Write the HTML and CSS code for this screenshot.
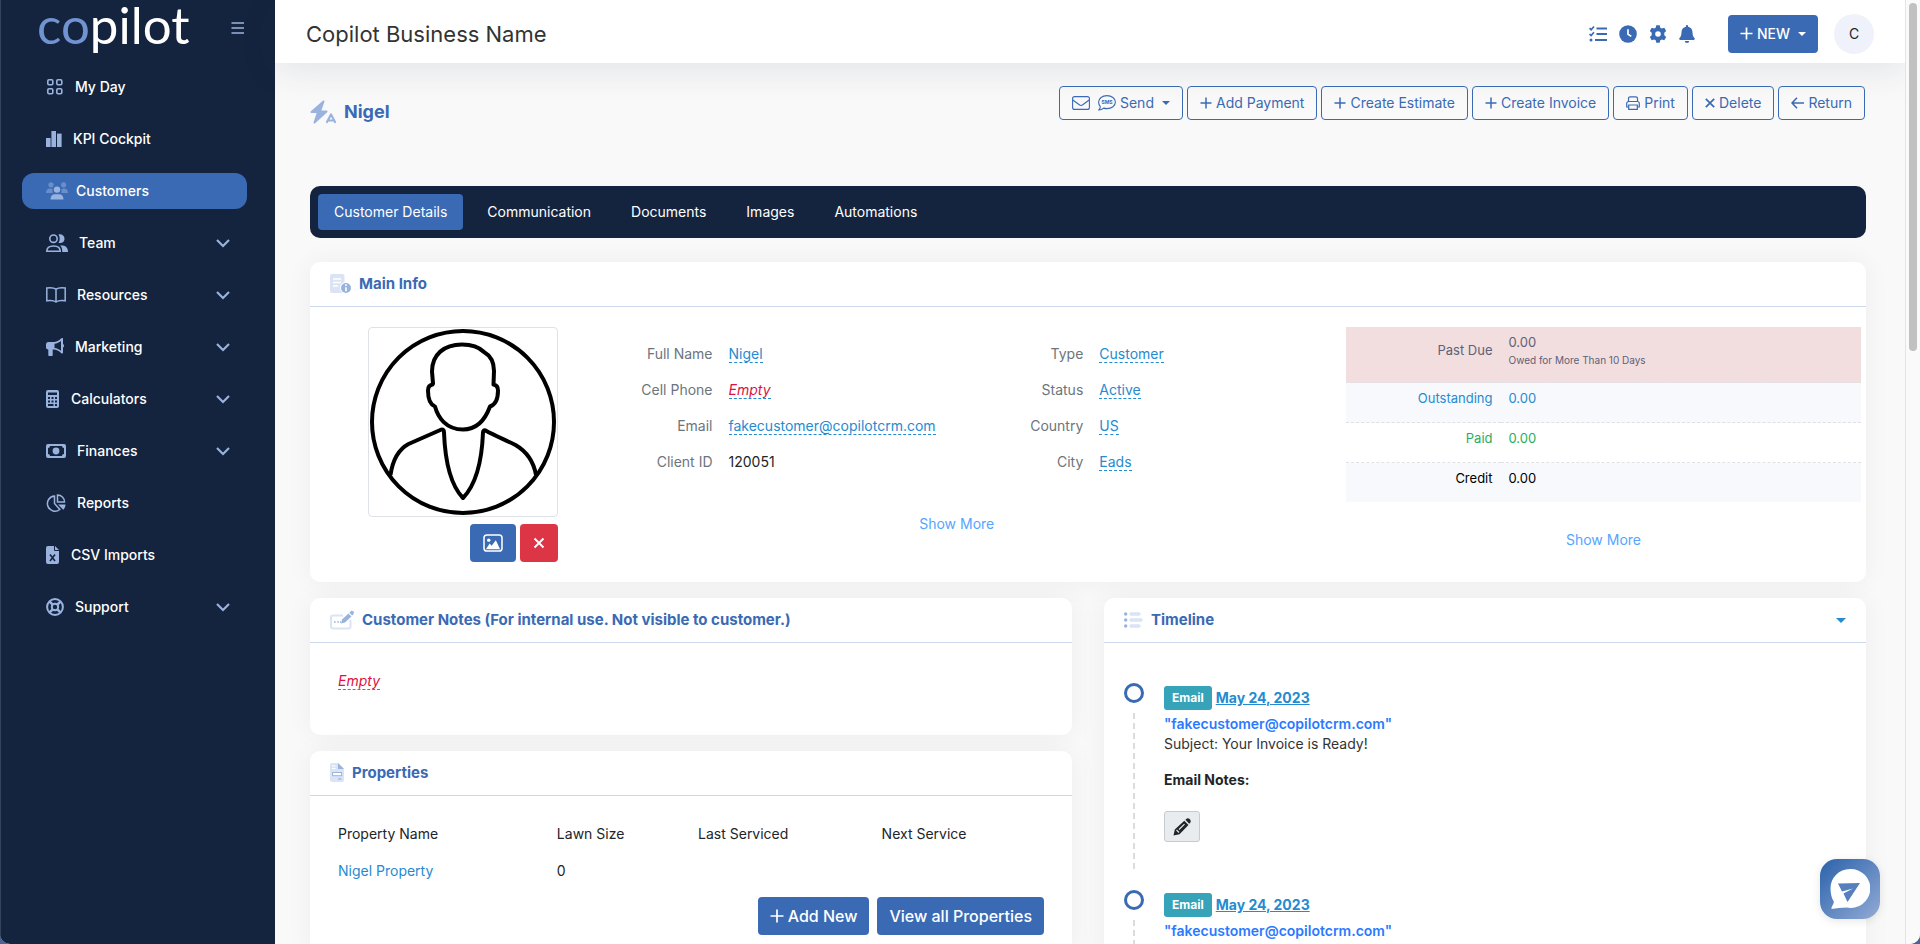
FILE: index.html
```
<!DOCTYPE html>
<html lang="en">
<head>
    <meta charset="UTF-8">
    <meta name="viewport" content="width=device-width, initial-scale=1.0">
    <title>Nigel - Copilot</title>
    <link rel="stylesheet" href="styles.css">
</head>
<body>
    <div class="app">
        <aside class="sidebar">
            <div class="brand">
                <a class="logo" href="#"><span class="logo-co">co</span>pilot</a>
                <button class="menu-toggle" aria-label="Toggle menu">
                    <svg width="14" height="12" viewBox="0 0 14 12" fill="none" stroke="currentColor" stroke-width="1.6"><path d="M0.5 1h12.5M0.5 6h12.5M0.5 11h12.5"/></svg>
                </button>
            </div>
            <nav class="nav">
                <a class="nav-item" href="#">
                    <svg width="18" height="18" viewBox="0 0 18 18" fill="none" stroke="currentColor" stroke-width="1.6"><rect x="1.8" y="1.8" width="5" height="5" rx="1.2"/><rect x="10.8" y="1.8" width="5" height="5" rx="1.2"/><rect x="1.8" y="10.8" width="5" height="5" rx="1.2"/><rect x="10.8" y="10.8" width="5" height="5" rx="1.2"/></svg>
                    <span>My Day</span>
                </a>
                <a class="nav-item" href="#">
                    <svg width="16" height="18" viewBox="0 0 16 18" fill="currentColor"><rect x="0" y="8" width="4.6" height="9"/><rect x="5.4" y="1" width="4.6" height="16"/><rect x="11" y="3.6" width="4.6" height="13.4"/></svg>
                    <span>KPI Cockpit</span>
                </a>
                <a class="nav-item active" href="#">
                    <svg class="wide" width="22" height="18" viewBox="0 0 22 18" fill="currentColor"><g opacity="0.5"><circle cx="5" cy="2.8" r="2.6"/><circle cx="17.6" cy="2.8" r="2.6"/><path d="M0 11c0-3 1.500-4.500 4-4.500 1.200 0 2 .3 2.700.8A5 5 0 0 0 6.800 11zM22 11c0-3-1.500-4.500-4-4.500-1.200 0-2 .3-2.700.8A5 5 0 0 1 15.200 11z"/></g><circle cx="11" cy="7.600" r="3.200"/><path d="M4.500 17.500c0-3.500 1.800-5.200 4.500-5.200h4c2.700 0 4.500 1.700 4.500 5.200z"/></svg>
                    <span>Customers</span>
                </a>
                <a class="nav-item" href="#">
                    <svg width="22" height="18" viewBox="0 0 22 18" fill="none" stroke="currentColor" stroke-width="1.600"><circle cx="7.500" cy="4.700" r="3.700"/><path d="M.8 17.200c0-3.600 2.200-5.200 6.700-5.200s6.700 1.600 6.700 5.200z"/><path d="M12.500.5c2.700-.8 6 .8 6 4.200s-3.300 5-6 4.200c1.600-2.600 1.600-5.800 0-8.400zM14 11.600c5-.4 8 1.400 8 6.400h-5.800c.2-2.800-.4-4.800-2.200-6.400z" fill="currentColor" stroke="none"/></svg>
                    <span>Team</span>
                    <svg class="chevron" width="14" height="9" viewBox="0 0 14 9" fill="none" stroke="currentColor" stroke-width="2.200"><path d="M1 1l6 6 6-6"/></svg>
                </a>
                <a class="nav-item" href="#">
                    <svg width="20" height="16" viewBox="0 0 20 16" fill="none" stroke="currentColor" stroke-width="1.500"><path d="M10 2.200C8 .8 4.500.5.8 1v12.800c3.700-.5 7.200-.2 9.200 1.200 2-1.400 5.500-1.700 9.200-1.200V1C15.500.5 12 .8 10 2.200zM10 2.200V15"/></svg>
                    <span>Resources</span>
                    <svg class="chevron" width="14" height="9" viewBox="0 0 14 9" fill="none" stroke="currentColor" stroke-width="2.200"><path d="M1 1l6 6 6-6"/></svg>
                </a>
                <a class="nav-item" href="#">
                    <svg width="18" height="18" viewBox="0 0 18 18" fill="currentColor"><path d="M17 .5c-.5-.7-1.400-.5-2 .1C13 2.800 10.500 4 7.500 4H2.300C1 4 0 5 0 6.300v3C0 10.600 1 11.600 2.300 11.600V17c0 .6.400 1 1 1h2.400c.6 0 1-.4 1-1v-5.400h.8c3 0 5.500 1.200 7.500 3.400.6.600 1.500.8 2 .1V9.500c.6-.3 1-1 1-1.700s-.4-1.400-1-1.700zM15 12.700c-1.900-1.500-4-2.500-6.500-2.800V5.700C11 5.400 13.100 4.400 15 2.900z"/></svg>
                    <span>Marketing</span>
                    <svg class="chevron" width="14" height="9" viewBox="0 0 14 9" fill="none" stroke="currentColor" stroke-width="2.200"><path d="M1 1l6 6 6-6"/></svg>
                </a>
                <a class="nav-item" href="#">
                    <svg width="14" height="18" viewBox="0 0 14 18" fill="currentColor"><path fill-rule="evenodd" d="M2 0h9a2 2 0 0 1 2 2v14a2 2 0 0 1-2 2H2a2 2 0 0 1-2-2V2a2 2 0 0 1 2-2zM2 2.500V5h9V2.500zM2 7v2h2V7zm3.500 0v2h2V7zM9 7v2h2V7zM2 10.500v2h2v-2zm3.500 0v2h2v-2zm3.500 0v2h2v-2zM2 14v2h5.500v-2zm7 0v2h2v-2z"/></svg>
                    <span>Calculators</span>
                    <svg class="chevron" width="14" height="9" viewBox="0 0 14 9" fill="none" stroke="currentColor" stroke-width="2.200"><path d="M1 1l6 6 6-6"/></svg>
                </a>
                <a class="nav-item" href="#">
                    <svg width="20" height="14" viewBox="0 0 20 14" fill="currentColor"><path fill-rule="evenodd" d="M2 0h16a2 2 0 0 1 2 2v10a2 2 0 0 1-2 2H2a2 2 0 0 1-2-2V2a2 2 0 0 1 2-2zM4 2C4 3.200 3.200 4 2 4v6c1.200 0 2 .8 2 2h12c0-1.200.8-2 2-2V4c-1.200 0-2-.8-2-2z"/><circle cx="10" cy="7" r="3.400"/></svg>
                    <span>Finances</span>
                    <svg class="chevron" width="14" height="9" viewBox="0 0 14 9" fill="none" stroke="currentColor" stroke-width="2.200"><path d="M1 1l6 6 6-6"/></svg>
                </a>
                <a class="nav-item" href="#">
                    <svg width="20" height="18" viewBox="0 0 20 18" fill="none" stroke="currentColor" stroke-width="1.500"><path d="M8.500 2A7.600 7.600 0 1 0 13.800 15.500L8.500 9.500z"/><path d="M11.500.9v7h7A7 7 0 0 0 11.500.9z"/><path d="M12 10.500h7.500c0 2-.8 3.800-2.200 5.200z" fill="currentColor" stroke="none"/></svg>
                    <span>Reports</span>
                </a>
                <a class="nav-item" href="#">
                    <svg width="14" height="18" viewBox="0 0 14 18" fill="currentColor"><path d="M2 0h6v4a1 1 0 0 0 1 1h4v11a2 2 0 0 1-2 2H2a2 2 0 0 1-2-2V2a2 2 0 0 1 2-2z"/><path d="M9 0l4 4H9z"/><path d="M4 8.500l5 6.500M9 8.500L4 15" stroke="#14243e" stroke-width="1.600"/></svg>
                    <span>CSV Imports</span>
                </a>
                <a class="nav-item" href="#">
                    <svg width="18" height="18" viewBox="0 0 18 18" fill="none" stroke="currentColor"><circle cx="9" cy="9" r="7.900" stroke-width="2"/><circle cx="9" cy="9" r="3.200" stroke-width="2"/><path d="M3.300 3.300l3.400 3.400M14.700 3.300l-3.400 3.400M3.300 14.700l3.400-3.400M14.700 14.700l-3.400-3.400" stroke-width="2.600"/></svg>
                    <span>Support</span>
                    <svg class="chevron" width="14" height="9" viewBox="0 0 14 9" fill="none" stroke="currentColor" stroke-width="2.200"><path d="M1 1l6 6 6-6"/></svg>
                </a>
            </nav>
        </aside>

        <div class="page">
            <header class="topbar">
                <h1>Copilot Business Name</h1>
                <div class="topbar-icons">
                    <button aria-label="Tasks">
                        <svg width="18" height="18" viewBox="0 0 18 18" fill="none" stroke="currentColor" stroke-width="2.200"><path d="M7.500 3.500H18M7.500 9H18M6 15H18"/><path d="M.6 3.200l1.500 1.500L5 1.500M.6 9l1.500 1.500L5 7.300" stroke-width="1.700"/><circle cx="2" cy="15" r="1.500" fill="currentColor" stroke="none"/></svg>
                    </button>
                    <button aria-label="Time">
                        <svg width="18" height="18" viewBox="0 0 18 18"><circle cx="9" cy="9" r="8.800" fill="currentColor"/><path d="M9 4.300V9.200l3.300 2.200" fill="none" stroke="#fff" stroke-width="1.700"/></svg>
                    </button>
                    <button aria-label="Settings">
                        <svg width="18" height="18" viewBox="0 0 18 18" fill="currentColor"><path fill-rule="evenodd" d="M7.300.2h3.400l.6 2.500 1.500.9L15.300 2.800 17.200 6 15.300 7.800v2.400l1.900 1.800-1.900 3.200-2.500-.8-1.500.9-.6 2.500H7.300l-.6-2.500-1.500-.9-2.500.8L.8 12l1.900-1.800V7.800L.8 6l1.900-3.200 2.500.8 1.500-.9zM9 6.200a2.800 2.800 0 1 0 0 5.600 2.800 2.800 0 0 0 0-5.600z"/></svg>
                    </button>
                    <button aria-label="Notifications">
                        <svg width="16" height="18" viewBox="0 0 16 18" fill="currentColor"><path d="M8 0c.6 0 1.100.5 1.100 1.100v.6C11.700 2.200 13.500 4.400 13.500 7c0 3 .6 4.600 2 6 .7.8.2 1.900-.8 1.900H1.300c-1 0-1.500-1.100-.8-1.900 1.400-1.400 2-3 2-6 0-2.600 1.800-4.800 4.400-5.300v-.6C6.900.5 7.400 0 8 0zM5.800 16h4.400a2.200 2 0 0 1-4.400 0z"/></svg>
                    </button>
                </div>
                <button class="btn btn-primary btn-new">
                    <svg width="13" height="13" viewBox="0 0 13 13" fill="none" stroke="currentColor" stroke-width="1.700"><path d="M6.500 0.500v12M0.500 6.500h12"/></svg>
                    NEW
                    <span class="caret"></span>
                </button>
                <button class="user">C</button>
            </header>

            <main class="content">
                <div class="page-head">
                    <h2 class="page-title">
                        <svg width="26" height="24" viewBox="0 0 26 24" fill="none" stroke="currentColor" stroke-linejoin="round" stroke-linecap="round"><path d="M13.500 1.500L1.500 12h6.500L4.500 22.500 16.500 11.500H10z" fill="currentColor" stroke-width="2"/><path d="M17 22l4-7.500 4 7.500M18.500 20.500h5" stroke-width="2.200"/></svg>
                        Nigel
                    </h2>
                    <div class="actions">
                        <button class="btn btn-outline">
                            <svg width="18" height="14" viewBox="0 0 18 14" fill="none" stroke="currentColor" stroke-width="1.100"><rect x=".6" y=".6" width="16.800" height="12.800" rx="2"/><path d="M.8 4l6.500 4.800c1 .8 2.400.8 3.400 0L17.200 4"/></svg>
                            <svg class="sms" width="18" height="16" viewBox="0 0 18 16"><path d="M9 .6c4.700 0 8.400 2.800 8.400 6.500s-3.700 6.500-8.400 6.500c-1.200 0-2.300-.2-3.300-.5C4.500 14.200 2.700 15 .8 15c1-1 1.400-2 1.500-3.300C1.200 10.500.6 8.900.6 7.100.6 3.400 4.300.6 9 .6z" fill="none" stroke="currentColor" stroke-width="1.100"/><text x="9" y="9.300" text-anchor="middle">SMS</text></svg>
                            Send
                            <span class="caret"></span>
                        </button>
                        <button class="btn btn-outline"><svg width="12" height="12" viewBox="0 0 12 12" fill="none" stroke="currentColor" stroke-width="1.500"><path d="M6 .5v11M.5 6h11"/></svg>Add Payment</button>
                        <button class="btn btn-outline"><svg width="12" height="12" viewBox="0 0 12 12" fill="none" stroke="currentColor" stroke-width="1.500"><path d="M6 .5v11M.5 6h11"/></svg>Create Estimate</button>
                        <button class="btn btn-outline"><svg width="12" height="12" viewBox="0 0 12 12" fill="none" stroke="currentColor" stroke-width="1.500"><path d="M6 .5v11M.5 6h11"/></svg>Create Invoice</button>
                        <button class="btn btn-outline"><svg width="14" height="14" viewBox="0 0 14 14" fill="none" stroke="currentColor" stroke-width="1.200"><path d="M2.500 5.500v-3a1.700 1.700 0 0 1 1.700-1.700h5.600a1.700 1.700 0 0 1 1.700 1.700v3M2.500 11H.7V7.500a2 2 0 0 1 2-2h8.600a2 2 0 0 1 2 2V11h-1.800M2.700 9h8.600v4.300H2.700z"/></svg>Print</button>
                        <button class="btn btn-outline"><svg width="10" height="10" viewBox="0 0 10 10" fill="none" stroke="currentColor" stroke-width="1.700"><path d="M.8.800l8.400 8.400M9.200.8L.8 9.200"/></svg>Delete</button>
                        <button class="btn btn-outline"><svg width="13" height="12" viewBox="0 0 13 12" fill="none" stroke="currentColor" stroke-width="1.600"><path d="M6 .8L1 6l5 5.200M1 6h12"/></svg>Return</button>
                    </div>
                </div>

                <nav class="tabs">
                    <a class="tab active" href="#">Customer Details</a>
                    <a class="tab" href="#">Communication</a>
                    <a class="tab" href="#">Documents</a>
                    <a class="tab" href="#">Images</a>
                    <a class="tab" href="#">Automations</a>
                </nav>

                <section class="card main-info">
                    <h3 class="card-header">
                        <svg width="21" height="22" viewBox="0 0 21 22"><rect x="0" y="1" width="14.500" height="19" rx="2" fill="#dae4f5"/><path d="M3 6h8M3 9.500h8M3 13h5" stroke="#fff" stroke-width="1.300"/><circle cx="16" cy="15" r="6" fill="#fff"/><circle cx="16" cy="15" r="5" fill="#9ab3de"/><path d="M16 14.200v4M16 11.300v1.700" stroke="#fff" stroke-width="1.600"/></svg>
                        Main Info
                    </h3>
                    <div class="info-body">
                        <div class="photo-col">
                            <div class="photo">
                                <svg viewBox="0 0 186 186" role="img" aria-label="Customer photo" fill="none" stroke="#000" stroke-width="4" stroke-linejoin="round"><circle cx="93" cy="93" r="91"/><path d="M92 15.500c-18 0-30 10-30 27l1 12-.5 1c-3 .5-4.500 3-4.500 6 0 8 2 14 7 16 3 11 11 23 28 23 16 0 23-12 27-23 6-2 8-8 8-16 0-3-1.500-5.500-4.500-6L124 42c0-9-3-15-10-19-5-5-12-7.500-22-7.500z"/><path d="M20.500 146c2-14 7-25 18-31l33-14.500c2 0 2.500 1 2.500 3 1 26 5 51 19 65.500 14-14.500 19-39.500 20-65.500 0-2 1-2.500 2.500-2 9 5 20 9.500 30 14.500 12 7 18 16 20.500 30"/></svg>
                            </div>
                            <div class="photo-actions">
                                <button class="btn btn-primary" aria-label="Change photo">
                                    <svg width="20" height="18" viewBox="0 0 21 19"><rect x="1" y="1" width="19" height="17" rx="3" fill="none" stroke="currentColor" stroke-width="1.600"/><circle cx="6" cy="6.500" r="1.800" fill="currentColor"/><path d="M3 16l4-6 2 2.500 4.500-6L18 16z" fill="currentColor"/></svg>
                                </button>
                                <button class="btn btn-danger" aria-label="Remove photo">
                                    <svg width="12" height="12" viewBox="0 0 12 12" fill="none" stroke="currentColor" stroke-width="1.900"><path d="M1.500 1.500l9 9M10.500 1.500l-9 9"/></svg>
                                </button>
                            </div>
                        </div>
                        <div class="details-col">
                            <div class="details">
                                <dl>
                                    <dt>Full Name</dt><dd><a class="editable" href="#">Nigel</a></dd>
                                    <dt>Cell Phone</dt><dd><a class="editable empty" href="#">Empty</a></dd>
                                    <dt>Email</dt><dd><a class="editable" href="#">fakecustomer@copilotcrm.com</a></dd>
                                    <dt>Client ID</dt><dd>120051</dd>
                                </dl>
                                <dl>
                                    <dt>Type</dt><dd><a class="editable" href="#">Customer</a></dd>
                                    <dt>Status</dt><dd><a class="editable" href="#">Active</a></dd>
                                    <dt>Country</dt><dd><a class="editable" href="#">US</a></dd>
                                    <dt>City</dt><dd><a class="editable" href="#">Eads</a></dd>
                                </dl>
                            </div>
                            <a class="show-more" href="#">Show More</a>
                        </div>
                        <div class="balance-col">
                            <table class="balance">
                                <tr class="past-due"><th scope="row">Past Due</th><td>0.00<small>Owed for More Than 10 Days</small></td></tr>
                                <tr class="outstanding"><th scope="row">Outstanding</th><td>0.00</td></tr>
                                <tr class="paid"><th scope="row">Paid</th><td>0.00</td></tr>
                                <tr class="credit"><th scope="row">Credit</th><td>0.00</td></tr>
                            </table>
                            <a class="show-more" href="#">Show More</a>
                        </div>
                    </div>
                </section>

                <div class="columns">
                    <div class="column">
                        <section class="card">
                            <h3 class="card-header">
                                <svg width="24" height="22" viewBox="0 0 24 22"><path d="M13 6.500H3A2 2 0 0 0 1 8.500v9A2 2 0 0 0 3 19.500h15.500a2 2 0 0 0 2-2V11" fill="none" stroke="#dae4f5" stroke-width="2"/><path d="M4 13h1.600M7.300 13h1.600M10 13h1" stroke="#9ab3de" stroke-width="1.600"/><path d="M11 14.500l1-4 6.500-6 3 3-6.500 6zM19.300 3.700l1.500-1.500c1.600-1.400 4.200 1 2.700 2.700l-1.300 1.500z" fill="#9ab3de"/></svg>
                                Customer Notes (For internal use. Not visible to customer.)
                            </h3>
                            <div class="notes-body">
                                <a class="editable empty" href="#">Empty</a>
                            </div>
                        </section>
                        <section class="card">
                            <h3 class="card-header">
                                <svg width="14" height="22" viewBox="0 0 14 22"><path d="M2 1h6l6 6v11a2 2 0 0 1-2 2H2a2 2 0 0 1-2-2V3a2 2 0 0 1 2-2z" fill="#dae4f5"/><path d="M8 1l6 6H8z" fill="#9ab3de"/><path d="M2 4h3.500M2 6.500h3.500" stroke="#fff"/><rect x="2.600" y="10.500" width="9" height="3.200" fill="#fff" stroke="#9ab3de"/><path d="M8 17h3.500" stroke="#9ab3de" stroke-width="1.200"/></svg>
                                Properties
                            </h3>
                            <div class="properties-body">
                                <table class="properties">
                                    <thead>
                                        <tr><th>Property Name</th><th>Lawn Size</th><th>Last Serviced</th><th>Next Service</th></tr>
                                    </thead>
                                    <tbody>
                                        <tr><td><a href="#">Nigel Property</a></td><td>0</td><td></td><td></td></tr>
                                    </tbody>
                                </table>
                                <div class="properties-actions">
                                    <button class="btn btn-primary btn-lg"><svg width="14" height="14" viewBox="0 0 14 14" fill="none" stroke="currentColor" stroke-width="1.700"><path d="M7 .5v13M.5 7h13"/></svg>Add New</button>
                                    <button class="btn btn-primary btn-lg">View all Properties</button>
                                </div>
                            </div>
                        </section>
                    </div>

                    <section class="card">
                        <h3 class="card-header">
                            <svg width="19" height="18" viewBox="0 0 19 18"><path d="M7 3h8M7 9h10M7 15h8" stroke="#dae4f5" stroke-width="3.400" stroke-linecap="round"/><g fill="#9ab3de"><circle cx="1.700" cy="3" r="1.700"/><circle cx="1.700" cy="9" r="1.700"/><circle cx="1.700" cy="15" r="1.700"/></g></svg>
                            Timeline
                            <button class="collapse" aria-label="Collapse timeline"><span class="caret"></span></button>
                        </h3>
                        <ul class="timeline">
                            <li>
                                <div class="marker"></div>
                                <div class="event">
                                    <div class="event-title"><span class="badge">Email</span> <a href="#">May 24, 2023</a></div>
                                    <a class="event-email" href="#">"fakecustomer@copilotcrm.com"</a>
                                    <p>Subject: Your Invoice is Ready!</p>
                                    <h4>Email Notes:</h4>
                                    <button class="edit" aria-label="Edit notes">
                                        <svg width="18" height="18" viewBox="0 0 18 18"><path d="M.5 17.500l1.300-6L11.300 2.800l4.200 4.200-9 9.200zM12.400 1.800l.9-.9c2.400-1.900 5.700 1.600 3.900 3.800l-1 1z" fill="currentColor"/><path d="M3.500 12l2.500 2.500M6 11.500l5.500-5.300" stroke="#e9ecef" stroke-width="1.100"/></svg>
                                    </button>
                                </div>
                            </li>
                            <li>
                                <div class="marker"></div>
                                <div class="event">
                                    <div class="event-title"><span class="badge">Email</span> <a href="#">May 24, 2023</a></div>
                                    <a class="event-email" href="#">"fakecustomer@copilotcrm.com"</a>
                                </div>
                            </li>
                        </ul>
                    </section>
                </div>
            </main>
        </div>
        <div class="scroll-track"><div class="scroll-thumb"></div></div>
        <button class="chat" aria-label="Open chat">
            <svg width="40" height="42" viewBox="0 0 40 42"><path d="M20 1a19.500 19.500 0 1 1-3.500 38.500C11 39.500 6.500 40.500 1.500 41 1.200 38 4 37 3.800 33.500 1.500 30 .5 25 .5 20.500.5 9.500 9 1 20 1z" fill="#fff"/><path d="M8 15.500L30 15 17.500 34 13.500 25.500 23 20.500 12 23.500z" fill="#5580bd"/></svg>
        </button>
    </div>
</body>
</html>
```
FILE: styles.css
```
*,
*::before,
*::after {
    box-sizing: border-box;
}

body {
    margin: 0;
    font-family: Inter, sans-serif;
    font-size: 14px;
    line-height: 20px;
    color: #212529;
    background-color: #4c6493;
}

a {
    color: #258bd0;
    text-decoration: none;
}

button {
    font: inherit;
    color: inherit;
    cursor: pointer;
}

svg {
    display: block;
    flex-shrink: 0;
}

h1, h2, h3, h4, p, dl, dd, ul {
    margin: 0;
    padding: 0;
}

.app {
    display: flex;
    height: 100vh;
    overflow: hidden;
    background-color: #f9f9f9;
    border-radius: 0 0 10px 10px;
}

/* Sidebar */
.sidebar {
    width: 275px;
    flex-shrink: 0;
    padding: 0 28px 0 21px;
    background-color: #14243e;
    border-left: 1px solid #34435c;
    color: #9ab3de;
}

.brand {
    display: flex;
    align-items: center;
    justify-content: space-between;
    height: 55px;
    padding: 0 2px 0 15px;
}

.logo {
    padding-bottom: 5px;
    font-family: Lato, sans-serif;
    font-size: 51px;
    line-height: 50px;
    color: #fff;
}

.logo-co {
    color: #7193d1;
}

.menu-toggle {
    padding: 0;
    background: none;
    border: none;
}

.nav {
    display: flex;
    flex-direction: column;
    gap: 16px;
    padding-top: 14px;
}

.nav-item {
    display: flex;
    align-items: center;
    gap: 11px;
    height: 36px;
    padding: 0 17px 0 24px;
    border-radius: 12px;
    color: #9ab3de;
    font-weight: 500;
}

.nav-item span {
    color: #fff;
}

.nav-item.active {
    background-color: #3a6ab4;
}

.nav-item .wide {
    margin-right: -3px;
}

.chevron {
    margin-left: auto;
}

/* Page */
.page {
    flex: 1;
    min-width: 0;
}

.topbar {
    display: flex;
    align-items: center;
    height: 63px;
    padding: 4px 31px 0 31px;
    background-color: #fff;
    box-shadow: 0 8px 36px rgba(40, 50, 90, 0.1);
}

.topbar h1 {
    margin-right: auto;
    font-size: 22px;
    font-weight: 400;
    line-height: 28px;
    color: #333;
}

.topbar-icons {
    display: flex;
    gap: 12px;
    margin-right: 33px;
    color: #3a6ab4;
}

.topbar-icons button {
    padding: 0;
    background: none;
    border: none;
}

.btn {
    display: flex;
    align-items: center;
    justify-content: center;
    gap: 4px;
    height: 38px;
    padding: 0 12px;
    border: 1px solid transparent;
    border-radius: 4px;
    white-space: nowrap;
}

.btn-primary {
    color: #fff;
    background-color: #3a6ab4;
}

.btn-danger {
    color: #fff;
    background-color: #dc3545;
}

.btn-outline {
    height: 34px;
    color: #3a6ab4;
    background: none;
    border-color: #3a6ab4;
}

.btn-lg {
    padding: 0 11px;
    font-size: 16px;
    font-weight: 500;
}

.btn-new {
    margin-right: 16px;
    padding: 0 11px;
    font-weight: 500;
}

.caret {
    border: 4px solid transparent;
    border-top-color: currentColor;
    border-bottom: none;
    margin-left: 4px;
}

.user {
    width: 40px;
    height: 40px;
    border: none;
    border-radius: 50%;
    background-color: #eff2fa;
}

.content {
    padding: 23px 39px 0 35px;
}

.page-head {
    display: flex;
    justify-content: space-between;
    align-items: flex-start;
    min-height: 100px;
}

.page-title {
    display: flex;
    align-items: center;
    gap: 8px;
    padding-top: 14px;
    font-size: 18px;
    line-height: 24px;
    color: #3a6ab4;
}

.page-title svg {
    color: #9ab3de;
}

.actions {
    display: flex;
    gap: 4px;
    padding-right: 1px;
}

.sms {
    margin-left: 4px;
}

.sms text {
    fill: currentColor;
    font-size: 5px;
    font-weight: 700;
}

/* Tabs */
.tabs {
    display: flex;
    gap: 8px;
    margin-bottom: 24px;
    padding: 8px;
    border-radius: 10px;
    background-color: #14243e;
}

.tab {
    padding: 8px 16px;
    border-radius: 4px;
    color: #fff;
}

.tab.active {
    background-color: #3a6ab4;
}

/* Cards */
.card {
    border-radius: 10px;
    background-color: #fff;
    box-shadow: 0 0 28px rgba(0, 0, 0, 0.05);
}

.card-header {
    display: flex;
    align-items: center;
    gap: 8px;
    height: 45px;
    padding: 0 20px;
    border-bottom: 1px solid #cdd8ec;
    font-size: 15px;
    font-weight: 700;
    color: #3a6ab4;
}

.main-info {
    margin-bottom: 16px;
}

.info-body {
    display: grid;
    grid-template-columns: 1fr 3fr 2fr;
    column-gap: 3px;
    padding: 20px 5px 20px 0;
}

.photo-col {
    display: flex;
    flex-direction: column;
    align-items: flex-end;
    padding-right: 10px;
}

.photo {
    width: 190px;
    height: 190px;
    padding: 1px;
    border: 1px solid #dee2e6;
    border-radius: 4px;
}

.photo-actions {
    display: flex;
    gap: 4px;
    margin-top: 7px;
}

.details-col,
.balance-col {
    display: flex;
    flex-direction: column;
    align-items: center;
}

.details {
    display: grid;
    grid-template-columns: 12fr 13fr;
    width: 100%;
    padding-top: 9px;
    margin-bottom: 34px;
}

.details dl {
    display: grid;
    grid-template-columns: 142px 1fr;
    column-gap: 16px;
    line-height: 36px;
}

.details dt {
    text-align: right;
    color: #6c757d;
}

.editable {
    border-bottom: 1px dashed #258bd0;
}

.empty {
    color: #dd1144;
    font-style: italic;
}

.show-more {
    color: #55a5ff;
}

.balance {
    width: 100%;
    margin-bottom: 28px;
    border-collapse: collapse;
    font-size: 13px;
}

.balance th {
    width: 30%;
    padding: 5px 8px 14px;
    text-align: right;
    font-weight: 400;
}

.balance td {
    padding: 5px 8px 14px;
}

.balance small {
    display: block;
    font-size: 10px;
    line-height: 16px;
}

.balance tr + tr {
    border-top: 1px dashed #dee2e6;
}

.past-due {
    background-color: #f2dede;
    color: #5d6179;
}

.past-due th {
    vertical-align: middle;
}

.outstanding {
    background-color: #f7f9fd;
    color: #258bd0;
}

.paid {
    color: #27ae60;
}

.credit {
    background-color: #f7f9fd;
    color: #000;
}

.columns {
    display: grid;
    grid-template-columns: 1fr 1fr;
    gap: 32px;
}

.column {
    display: flex;
    flex-direction: column;
    gap: 16px;
}

.notes-body {
    padding: 28px 28px 44px;
}

.properties-body {
    padding: 20px 28px;
}

.properties {
    width: 100%;
    border-collapse: collapse;
    table-layout: fixed;
}

.properties th,
.properties td {
    padding: 8px 0;
    text-align: left;
    font-weight: 400;
}

.properties td {
    padding: 9px 0;
}

.properties th:nth-child(1) {
    width: 31%;
}

.properties th:nth-child(2) {
    width: 20%;
}

.properties th:nth-child(3) {
    width: 26%;
}

.properties-actions {
    display: flex;
    justify-content: flex-end;
    gap: 8px;
    margin-top: 7px;
}

/* Timeline */
.collapse {
    margin-left: auto;
    padding: 0;
    border: none;
    background: none;
    color: #258bd0;
}

.collapse .caret {
    display: block;
    border-width: 5px;
    border-bottom: none;
}

.timeline {
    padding: 40px 20px 0;
    list-style: none;
}

.timeline li {
    display: flex;
    gap: 20px;
    min-height: 207px;
}

.marker {
    display: flex;
    flex-direction: column;
    align-items: center;
    gap: 10px;
    padding-bottom: 18px;
}

.marker::before {
    content: "";
    width: 20px;
    height: 20px;
    border: 3px solid #3a6ab4;
    border-radius: 50%;
}

.marker::after {
    content: "";
    flex: 1;
    width: 2px;
    background: repeating-linear-gradient(#dcdcdc 0 6px, transparent 6px 10px);
}

.event {
    padding-top: 3px;
    color: #333;
}

.event-title {
    display: flex;
    align-items: center;
    gap: 4px;
    height: 24px;
    margin-bottom: 4px;
}

.event-title a {
    font-weight: 700;
    text-decoration: underline;
}

.badge {
    padding: 2px 8px;
    border-radius: 3px;
    background-color: #36a3b9;
    color: #fff;
    font-size: 12px;
    font-weight: 700;
}

.event-email {
    font-weight: 600;
    color: #2a7aff;
}

.event h4 {
    margin: 16px 0 21px;
    font-size: 14px;
    line-height: 20px;
    color: #212529;
}

.edit {
    width: 36px;
    height: 31px;
    padding: 0 8px;
    border: 1px solid #c8cbce;
    border-radius: 3px;
    background-color: #e9ecef;
    color: #212529;
}

/* Scrollbar */
.scroll-track {
    width: 15px;
    padding: 3px 3px 0 3px;
    border-left: 1px solid #e4e4e4;
    background-color: #fafafa;
}

.scroll-thumb {
    width: 8px;
    height: 37%;
    border-radius: 4px;
    background-color: #c1c1c1;
}

.chat {
    position: fixed;
    right: 40px;
    bottom: 25px;
    display: flex;
    align-items: center;
    justify-content: center;
    width: 60px;
    height: 60px;
    border: none;
    border-radius: 17px;
    background: linear-gradient(135deg, #2b62ab, #92abd5);
    box-shadow: 0 2px 8px rgba(0, 0, 0, 0.1);
}
```
